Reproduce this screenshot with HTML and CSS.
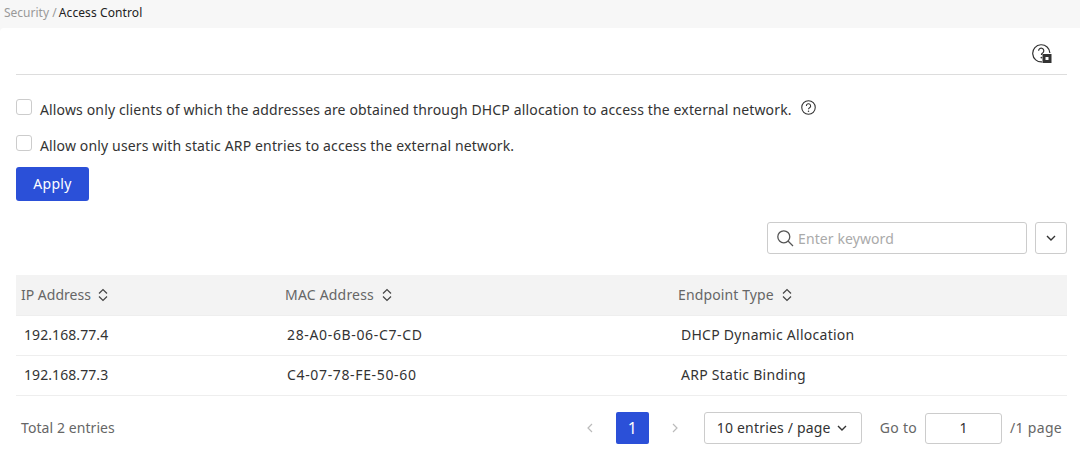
FILE: index.html
```html
<!DOCTYPE html>
<html lang="en">
<head>
    <meta charset="UTF-8">
    <title>Access Control</title>
    <link rel="stylesheet" href="styles.css">
</head>
<body>
    <div class="breadcrumb"><span class="crumb-parent">Security /</span> <span class="crumb-current">Access Control</span></div>

    <div class="content">
        <div class="toolbar">
            <svg class="help-icon" width="20" height="20" viewBox="0 0 20 20">
                <path d="M10 17.9A8.6 8.6 0 1 1 17.9 9" fill="none" stroke="#333" stroke-width="1.2"/>
                <path d="M6.6 6.8a2.6 2.6 0 1 1 4 2.2c-.9.5-1.2 1.1-1.2 2.1" fill="none" stroke="#333" stroke-width="1.2"/>
                <circle cx="9.4" cy="13.6" r=".9" fill="#333"/>
                <rect x="10.5" y="10" width="9" height="9" fill="#333"/>
                <rect x="13.5" y="13" width="3" height="3" fill="#fff"/>
            </svg>
        </div>

        <div class="option first">
            <span class="checkbox"></span>
            <span>Allows only clients of which the addresses are obtained through DHCP allocation to access the external network.</span>
            <svg class="tip-icon" width="15" height="15" viewBox="0 0 14 14">
                <circle cx="7" cy="7" r="6.3" fill="none" stroke="#333" stroke-width="1"/>
                <path d="M5 5.6a2 2 0 1 1 3 1.6c-.7.4-1 .8-1 1.5" fill="none" stroke="#333" stroke-width="1"/>
                <circle cx="7" cy="10.4" r=".7" fill="#333"/>
            </svg>
        </div>
        <div class="option">
            <span class="checkbox"></span>
            <span>Allow only users with static ARP entries to access the external network.</span>
        </div>
        <button class="btn-apply">Apply</button>

        <div class="search-row">
            <div class="search-box">
                <svg width="18" height="18" viewBox="0 0 18 18">
                    <circle cx="7.8" cy="7.8" r="6" fill="none" stroke="#555" stroke-width="1.3"/>
                    <path d="M12 12l5 5" stroke="#555" stroke-width="1.3"/>
                </svg>
                <span class="placeholder">Enter keyword</span>
            </div>
            <div class="search-more">
                <svg width="10" height="6" viewBox="0 0 10 6"><path d="M1 1l4 4 4-4" fill="none" stroke="#333" stroke-width="1.4"/></svg>
            </div>
        </div>

        <div class="table">
            <div class="row head">
                <div class="col-ip">IP Address <svg class="sort" width="10" height="14" viewBox="0 0 10 14"><path d="M1 5.5l4-4 4 4M1 8.5l4 4 4-4" fill="none" stroke="#444" stroke-width="1.2"/></svg></div>
                <div class="col-mac">MAC Address <svg class="sort" width="10" height="14" viewBox="0 0 10 14"><path d="M1 5.5l4-4 4 4M1 8.5l4 4 4-4" fill="none" stroke="#444" stroke-width="1.2"/></svg></div>
                <div class="col-type">Endpoint Type <svg class="sort" width="10" height="14" viewBox="0 0 10 14"><path d="M1 5.5l4-4 4 4M1 8.5l4 4 4-4" fill="none" stroke="#444" stroke-width="1.2"/></svg></div>
            </div>
            <div class="row">
                <div class="col-ip">192.168.77.4</div>
                <div class="col-mac">28-A0-6B-06-C7-CD</div>
                <div class="col-type">DHCP Dynamic Allocation</div>
            </div>
            <div class="row">
                <div class="col-ip">192.168.77.3</div>
                <div class="col-mac">C4-07-78-FE-50-60</div>
                <div class="col-type">ARP Static Binding</div>
            </div>
        </div>

        <div class="pager">
            <div class="total">Total 2 entries</div>
            <svg class="arrow" width="7" height="10" viewBox="0 0 7 10"><path d="M6 1L2 5l4 4" fill="none" stroke="#bbb" stroke-width="1.2"/></svg>
            <div class="page-current">1</div>
            <svg class="arrow" width="7" height="10" viewBox="0 0 7 10"><path d="M1 1l4 4-4 4" fill="none" stroke="#bbb" stroke-width="1.2"/></svg>
            <div class="page-size"><span>10 entries / page</span>
                <svg width="10" height="6" viewBox="0 0 10 6"><path d="M1 1l4 4 4-4" fill="none" stroke="#333" stroke-width="1.4"/></svg>
            </div>
            <div class="goto">Go to</div>
            <div class="goto-input"><span>1</span></div>
            <div class="goto">/1 page</div>
        </div>
    </div>
</body>
</html>
```

FILE: styles.css
```css
body {
    font-family: "Noto Sans", "Open Sans", sans-serif;
    font-size: 14px;
    color: #333333;
    margin: 0;
    padding: 0;
    background-color: #f7f7f7;
}

.breadcrumb {
    height: 28px;
    line-height: 26px;
    padding-left: 4px;
    font-size: 12px;
}

.crumb-parent {
    color: #999999;
}

.crumb-current {
    color: #222222;
    margin-left: -1px;
    letter-spacing: 0.1px;
}

.content {
    background-color: #ffffff;
    border-top-left-radius: 4px;
    padding: 0 13px 13px 16px;
    height: 416px;
}

.toolbar {
    height: 46px;
    border-bottom: 1px solid #dddddd;
    display: flex;
    justify-content: flex-end;
    align-items: center;
    padding-right: 15px;
}

.help-icon {
    margin-top: 6px;
}

.option {
    display: flex;
    align-items: center;
    height: 20px;
    margin-bottom: 16px;
    letter-spacing: 0.145px;
}

.option.first {
    margin-top: 24px;
}

.checkbox {
    width: 14px;
    height: 14px;
    border: 1px solid #cccccc;
    border-radius: 3px;
    margin-right: 8px;
    margin-top: -5px;
    flex-shrink: 0;
}

.tip-icon {
    margin-left: 9px;
    margin-top: -3px;
}

.btn-apply {
    display: block;
    width: 73px;
    height: 34px;
    margin-top: -4px;
    padding: 0 0 2px;
    background-color: #2b50d8;
    color: #ffffff;
    border: none;
    border-radius: 3px;
    font-family: inherit;
    font-size: 14px;
    letter-spacing: 0.3px;
}

.search-row {
    display: flex;
    justify-content: flex-end;
    gap: 8px;
    margin-top: 21px;
}

.search-box {
    width: 260px;
    height: 32px;
    border: 1px solid #cccccc;
    border-radius: 3px;
    display: flex;
    align-items: center;
    gap: 4px;
    padding-left: 8px;
    box-sizing: border-box;
}

.placeholder {
    color: #aaaaaa;
    letter-spacing: 0.1px;
}

.search-more {
    width: 32px;
    height: 32px;
    border: 1px solid #cccccc;
    border-radius: 3px;
    box-sizing: border-box;
    display: flex;
    align-items: center;
    justify-content: center;
}

.table {
    margin-top: 21px;
}

.row {
    display: flex;
    align-items: center;
    height: 39px;
    border-bottom: 1px solid #eeeeee;
    padding-left: 8px;
}

.row > div {
    margin-top: -2px;
}

.row.head {
    height: 40px;
    background-color: #f3f3f3;
    color: #666666;
    padding-left: 5px;
}

.col-ip {
    width: 263px;
    letter-spacing: 0.08px;
}

.col-mac {
    width: 394px;
    letter-spacing: 0.65px;
}

.col-type {
    letter-spacing: 0.26px;
}

.row.head .col-ip {
    width: 264px;
    letter-spacing: 0;
}

.row.head .col-mac {
    width: 393px;
    letter-spacing: 0.2px;
}

.row.head .col-type {
    letter-spacing: 0.12px;
}

.sort {
    margin-left: 4px;
    vertical-align: -2px;
}

.pager {
    display: flex;
    align-items: center;
    margin-top: 16px;
    height: 32px;
    padding-right: 5px;
}

.total {
    margin-left: 5px;
    margin-right: auto;
    margin-top: -2px;
    color: #666666;
    letter-spacing: 0.08px;
}

.arrow {
    flex-shrink: 0;
}

.page-current {
    width: 33px;
    height: 32px;
    line-height: 32px;
    margin: 0 23px;
    text-align: center;
    background-color: #2b50d8;
    color: #ffffff;
    border-radius: 2px;
    font-size: 16px;
}

.page-size {
    width: 158px;
    height: 32px;
    margin-left: 25px;
    margin-right: 18px;
    padding-right: 2px;
    border: 1px solid #cccccc;
    border-radius: 3px;
    box-sizing: border-box;
    display: flex;
    align-items: center;
    justify-content: center;
    gap: 6px;
    letter-spacing: 0.18px;
}

.page-size span {
    margin-top: -2px;
}

.goto {
    margin-top: -2px;
    color: #666666;
    letter-spacing: 0.3px;
}

.goto-input {
    width: 77px;
    height: 31px;
    line-height: 28px;
    margin: 0 8px;
    text-align: center;
    border: 1px solid #cccccc;
    border-radius: 3px;
    box-sizing: border-box;
}
```
